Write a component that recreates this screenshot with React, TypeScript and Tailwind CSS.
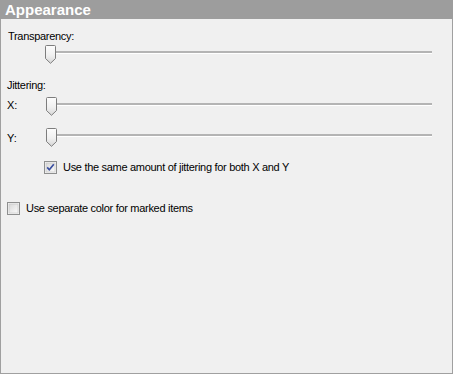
import React from "react";

const Thumb = () => (
  <svg width="11" height="19" viewBox="0 0 11 19" className="absolute left-0 top-0">
    <defs>
      <linearGradient id="thumbFill" x1="0" y1="0" x2="0" y2="1">
        <stop offset="0" stopColor="#fdfdfd" />
        <stop offset="0.55" stopColor="#f0f0f0" />
        <stop offset="1" stopColor="#d6d6d6" />
      </linearGradient>
    </defs>
    <path d="M0.5 1.5 Q0.5 0.5 1.5 0.5 H9.5 Q10.5 0.5 10.5 1.5 V13.5 L5.5 18.3 L0.5 13.5 Z" fill="url(#thumbFill)" stroke="#7d7d7d" />
  </svg>
);

const Slider = ({ className = "" }: { className?: string }) => (
  <div className={`relative h-[19px] ${className}`}>
    {/* track */}
    <div className="absolute left-[3px] right-0 top-[6px] h-[2px] bg-[#b4b4b4] border-b border-white box-content" />
    <Thumb />
  </div>
);

const CheckBox = ({ checked }: { checked?: boolean }) => (
  <svg width="13" height="13" viewBox="0 0 13 13" className="shrink-0">
    <defs>
      <linearGradient id={checked ? "cbOn" : "cbOff"} x1="0" y1="0" x2="1" y2="1">
        <stop offset="0" stopColor="#d8d8d8" />
        <stop offset="1" stopColor="#fbfbfb" />
      </linearGradient>
    </defs>
    <rect x="0.5" y="0.5" width="12" height="12" fill="#f4f4f4" stroke="#8e8f8f" />
    <rect x="2" y="2" width="9" height="9" fill={`url(#${checked ? "cbOn" : "cbOff"})`} stroke="#c4c4c4" strokeWidth="0.6" />
    {checked && (
      <path d="M3.2 6.4 L5.3 8.8 L9.8 3.2" fill="none" stroke="#3a4fa0" strokeWidth="1.7" />
    )}
  </svg>
);

export default function App() {
  return (
    <div className="w-[453px] h-[374px] flex flex-col font-['Liberation_Sans',Arial,sans-serif] text-[11px] leading-[13px] text-black">
      {/* header */}
      <div className="h-[19px] shrink-0 bg-[#9d9d9d] pl-[5px] text-[15px] leading-[19px] font-bold text-white">
        Appearance
      </div>

      {/* body */}
      <div className="flex-1 bg-[#f0f0f0] border-x border-b border-[#a0a0a0] px-[6px] flex flex-col">
        <div className="mt-[11px] ml-px tracking-[-0.3px]">Transparency:</div>
        <Slider className="mt-[2px] ml-[38px] mr-[14px]" />

        <div className="mt-[15px] tracking-[-0.3px]">Jittering:</div>
        <div className="mt-[5px] flex items-start mr-[14px]">
          <span className="w-[39px] pt-[2px]">X:</span>
          <Slider className="flex-1" />
        </div>
        <div className="mt-[12px] flex items-start mr-[14px]">
          <span className="w-[39px] pt-[4px]">Y:</span>
          <Slider className="flex-1" />
        </div>

        <label className="mt-[14px] ml-[37px] flex items-center gap-[6px] tracking-[-0.3px]">
          <CheckBox checked />
          <span>Use the same amount of jittering for both X and Y</span>
        </label>

        <label className="mt-[28px] flex items-center gap-[6px] tracking-[-0.3px]">
          <CheckBox />
          <span>Use separate color for marked items</span>
        </label>
      </div>
    </div>
  );
}
